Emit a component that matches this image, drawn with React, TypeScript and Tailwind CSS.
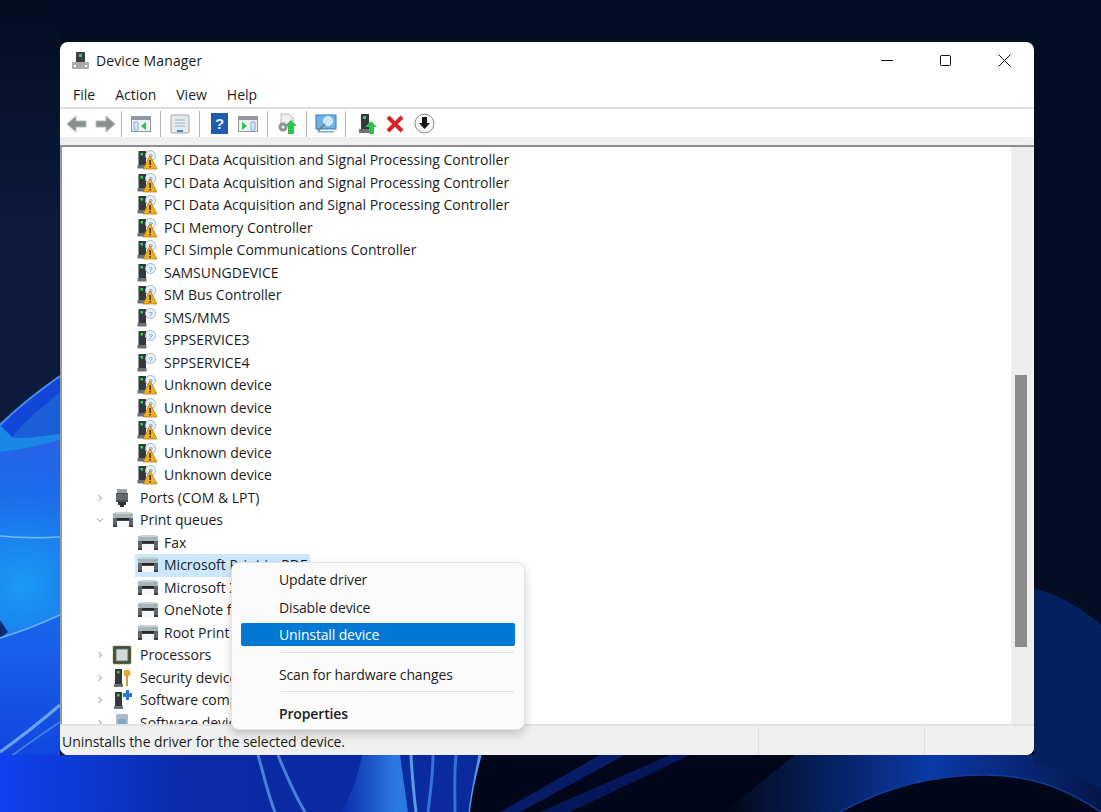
import React from "react";

const font = "font-['Open_Sans','Noto_Sans',sans-serif]";

function Wallpaper() {
  return (
    <svg className="absolute inset-0" width="1101" height="812" viewBox="0 0 1101 812">
      <defs>
        <radialGradient id="glow" cx="22" cy="585" r="170" gradientUnits="userSpaceOnUse">
          <stop offset="0" stopColor="#1a9bf8" />
          <stop offset="0.55" stopColor="#1c6cea" />
          <stop offset="1" stopColor="#2a5fe6" />
        </radialGradient>
        <linearGradient id="sky" x1="0" y1="0" x2="0" y2="1">
          <stop offset="0" stopColor="#030c20" />
          <stop offset="0.5" stopColor="#0c1b3c" />
        </linearGradient>
        <linearGradient id="lower" x1="0" y1="0" x2="0" y2="1">
          <stop offset="0" stopColor="#1a66ee" />
          <stop offset="1" stopColor="#0d3ad8" />
        </linearGradient>
        <linearGradient id="bottom" x1="0" y1="0" x2="1" y2="0">
          <stop offset="0" stopColor="#0f42f0" />
          <stop offset="0.4" stopColor="#0a2aa8" />
          <stop offset="1" stopColor="#0a2a9c" />
        </linearGradient>
        <linearGradient id="band" x1="0" y1="0" x2="1" y2="0">
          <stop offset="0" stopColor="#0a2aa8" />
          <stop offset="0.8" stopColor="#2a78e0" />
          <stop offset="1" stopColor="#2a78e0" />
        </linearGradient>
        <linearGradient id="swoosh" x1="0" y1="0" x2="1" y2="0">
          <stop offset="0" stopColor="#020818" />
          <stop offset="0.55" stopColor="#0a3aa8" />
          <stop offset="1" stopColor="#05174a" />
        </linearGradient>
      </defs>
      <rect width="1101" height="812" fill="#030e24" />
      <rect x="0" y="0" width="60" height="440" fill="url(#sky)" />

      {/* left side swirl */}
      <path d="M0 425 C20 405 40 390 60 376 L60 812 L0 812 Z" fill="#1246d8" />
      <path d="M0 448 C20 440 40 436 60 434 L60 640 L0 640 Z" fill="url(#glow)" />
      <path d="M12 437 C25 420 45 405 60 392 L60 434 C40 436 25 442 12 437 Z" fill="#1b5fd8" />
      <path d="M0 425 L0 452 C20 450 40 445 60 440 L60 434 C40 436 20 440 12 437 Z" fill="#1a86e6" />
      <path d="M0 425 C20 405 40 390 60 376" fill="none" stroke="#4a8eea" strokeWidth="2" />
      <path d="M0 536 C20 538 40 538 60 537" fill="none" stroke="#79bcf6" strokeWidth="1.5" />
      <path d="M0 620 L8 632 L0 638 Z" fill="#0c2a70" />
      <path d="M0 638 L60 615 L60 812 L0 812 Z" fill="url(#lower)" />
      <path d="M0 638 C20 632 40 624 60 615" fill="none" stroke="#6fb2f2" strokeWidth="1.5" />
      <path d="M0 752 C20 738 40 722 60 705" fill="none" stroke="#6aa4ee" strokeWidth="3" />
      <path d="M0 764 C20 750 40 735 60 722" fill="none" stroke="#3f7ee4" strokeWidth="2" />

      {/* bottom strip */}
      <rect x="0" y="755" width="482" height="57" fill="url(#bottom)" />
      <path d="M258 755 C264 775 268 795 275 812" fill="none" stroke="#4a80d8" strokeWidth="3" />
      <path d="M278 755 C286 775 295 795 305 812" fill="none" stroke="#4a80d8" strokeWidth="3" />
      <path d="M362 755 L400 755 L408 812 L340 812 C352 795 358 775 362 755 Z" fill="url(#band)" />
      <path d="M411 755 C412 775 414 795 416 812" fill="none" stroke="#5a9ae4" strokeWidth="3" />
      <path d="M433 755 C433 775 430 795 428 812" fill="none" stroke="#2f74d8" strokeWidth="3" />
      <path d="M456 755 C454 775 455 795 455 812" fill="none" stroke="#2f74d8" strokeWidth="3" />
      <path d="M480 755 C476 775 472 795 470 812" fill="none" stroke="#5a9ae4" strokeWidth="3" />
      <path d="M482 755 L1101 755 L1101 812 L470 812 C472 795 476 775 482 755 Z" fill="#01061a" />
      <path d="M625 755 L520 812 L500 812 L600 755 Z" fill="#061c66" />
      <path d="M690 755 L570 812 L540 812 L670 755 Z" fill="#05175a" />
      <path d="M795 755 C770 775 745 795 725 812 L840 812 C880 790 930 775 985 775 C1040 775 1075 795 1101 812 L1101 755 Z" fill="url(#swoosh)" />
      <path d="M840 812 C880 790 930 775 985 775 C1040 775 1075 795 1101 812" fill="#01061a" stroke="#123c9c" strokeWidth="1.5" />

      {/* right side */}
      <path d="M1034 588 C1060 595 1085 610 1101 625 L1101 790 C1085 778 1060 768 1034 765 Z" fill="#04205e" />
    </svg>
  );
}

function TreeIcon({ kind }: { kind: string }) {
  if (kind === "warn" || kind === "unknown") {
    return (
      <svg width="20" height="20" viewBox="0 0 20 20">
        <rect x="1.5" y="1" width="7.5" height="14" fill="#33383c" />
        <rect x="3.5" y="3" width="2.5" height="2.5" fill="#2fd55a" />
        <rect x="0.5" y="15" width="9" height="3.5" fill="#6b7074" />
        <circle cx="13.5" cy="5.5" r="5" fill="#eef4fa" stroke="#9fb3c6" />
        <text x="13.5" y="8.5" fontSize="8" textAnchor="middle" fill="#2a7fd0" fontFamily="Liberation Sans">?</text>
        {kind === "warn" && <path d="M13 5.5 L20 19 L6 19 Z" fill="#f2b01e" stroke="#a9700f" strokeWidth="0.7" />}
        {kind === "warn" && <rect x="12.4" y="10" width="1.4" height="5" fill="#222" />}
        {kind === "warn" && <rect x="12.4" y="16" width="1.4" height="1.5" fill="#222" />}
      </svg>
    );
  }
  if (kind === "printer") {
    return (
      <svg width="22" height="18" viewBox="0 0 22 18">
        <rect x="1" y="2" width="20" height="5" rx="1" fill="#a7b4ba" />
        <rect x="3" y="1" width="16" height="2" fill="#c9d2d6" />
        <rect x="17" y="4" width="2" height="1" fill="#3fd463" />
        <rect x="1" y="7" width="20" height="7" fill="#5e6468" />
        <rect x="5" y="7" width="12" height="2.5" fill="#25282b" />
        <rect x="5" y="10" width="12" height="6" fill="#f4f6f7" />
        <rect x="1" y="14" width="4" height="2" fill="#3c4043" />
        <rect x="17" y="14" width="4" height="2" fill="#3c4043" />
      </svg>
    );
  }
  if (kind === "ports") {
    return (
      <svg width="20" height="20" viewBox="0 0 20 20">
        <rect x="5" y="1" width="10" height="4" fill="#9aa0a4" />
        <rect x="4" y="5" width="12" height="9" fill="#4b5054" />
        <path d="M4 7h12M4 9h12M4 11h12" stroke="#8b9195" strokeWidth="0.8" />
        <rect x="6" y="14" width="8" height="3" fill="#2e3235" />
        <rect x="8" y="17" width="4" height="2" fill="#2e3235" />
      </svg>
    );
  }
  if (kind === "cpu") {
    return (
      <svg width="20" height="20" viewBox="0 0 20 20">
        <rect x="1" y="1" width="18" height="18" rx="1" fill="#35503f" stroke="#b9893a" strokeDasharray="1.5 1" />
        <rect x="4" y="4" width="12" height="12" fill="#d5dad9" stroke="#69736f" />
      </svg>
    );
  }
  if (kind === "security") {
    return (
      <svg width="20" height="20" viewBox="0 0 20 20">
        <rect x="3" y="1" width="7" height="15" fill="#33383c" />
        <rect x="5" y="3" width="2.5" height="2.5" fill="#2fd55a" />
        <rect x="2" y="16" width="9" height="3" fill="#6b7074" />
        <circle cx="15" cy="5" r="3.5" fill="#e8a92e" />
        <rect x="14" y="7" width="2" height="11" fill="#d9962a" />
      </svg>
    );
  }
  if (kind === "software") {
    return (
      <svg width="20" height="20" viewBox="0 0 20 20">
        <rect x="3" y="2" width="7" height="14" fill="#33383c" />
        <rect x="5" y="4" width="2.5" height="2.5" fill="#2fd55a" />
        <rect x="2" y="16" width="9" height="3" fill="#6b7074" />
        <path d="M11 3h3V0h3v3h3v4h-3v3h-3V7h-3z" fill="#2a78d2" />
      </svg>
    );
  }
  return (
    <svg width="20" height="20" viewBox="0 0 20 20">
      <rect x="4" y="1" width="12" height="17" rx="1" fill="#aebcc9" />
      <rect x="6" y="6" width="8" height="8" fill="#7fa8cc" />
    </svg>
  );
}

const pci = "PCI Data Acquisition and Signal Processing Controller";
const rows: { label: string; icon: string; level: number; chevron?: string; selected?: boolean }[] = [
  { label: pci, icon: "warn", level: 2 },
  { label: pci, icon: "warn", level: 2 },
  { label: pci, icon: "warn", level: 2 },
  { label: "PCI Memory Controller", icon: "warn", level: 2 },
  { label: "PCI Simple Communications Controller", icon: "warn", level: 2 },
  { label: "SAMSUNGDEVICE", icon: "unknown", level: 2 },
  { label: "SM Bus Controller", icon: "warn", level: 2 },
  { label: "SMS/MMS", icon: "unknown", level: 2 },
  { label: "SPPSERVICE3", icon: "unknown", level: 2 },
  { label: "SPPSERVICE4", icon: "unknown", level: 2 },
  { label: "Unknown device", icon: "warn", level: 2 },
  { label: "Unknown device", icon: "warn", level: 2 },
  { label: "Unknown device", icon: "warn", level: 2 },
  { label: "Unknown device", icon: "warn", level: 2 },
  { label: "Unknown device", icon: "warn", level: 2 },
  { label: "Ports (COM & LPT)", icon: "ports", level: 1, chevron: "right" },
  { label: "Print queues", icon: "printer", level: 1, chevron: "down" },
  { label: "Fax", icon: "printer", level: 2 },
  { label: "Microsoft Print to PDF", icon: "printer", level: 2, selected: true },
  { label: "Microsoft XPS Document Writer", icon: "printer", level: 2 },
  { label: "OneNote for Windows 10", icon: "printer", level: 2 },
  { label: "Root Print Queue", icon: "printer", level: 2 },
  { label: "Processors", icon: "cpu", level: 1, chevron: "right" },
  { label: "Security devices", icon: "security", level: 1, chevron: "right" },
  { label: "Software components", icon: "software", level: 1, chevron: "right" },
  { label: "Software devices", icon: "device", level: 1, chevron: "right" },
];

function TreeRow({ row }: { row: (typeof rows)[number] }) {
  return (
    <div className={`flex h-[22.5px] items-center ${row.level === 1 ? "pl-[30px]" : "pl-[73px]"}`}>
      {row.level === 1 && (
        <span className="flex w-[16px] justify-center text-[#8a8a8a]">
          <svg width="8" height="8" viewBox="0 0 8 8" fill="none" stroke="currentColor" strokeWidth="1">
            {row.chevron === "right" ? <path d="M2.5 1 L5.5 4 L2.5 7" /> : <path d="M1 2.5 L4 5.5 L7 2.5" />}
          </svg>
        </span>
      )}
      <div className={`flex h-[22.5px] items-center ${row.selected ? "bg-[#cce8ff]" : ""} ${row.level === 1 ? "ml-[4px]" : "pl-[2px]"}`}>
        <span className={`flex items-center ${row.level === 1 ? "w-[28px]" : "w-[27px]"}`}><TreeIcon kind={row.icon} /></span>
        <span className="whitespace-nowrap pr-[3px] text-[14px] leading-none text-[#1c1c1c]">{row.label}</span>
      </div>
    </div>
  );
}

function ToolSep({ tight }: { tight?: boolean }) {
  return <span className={`mr-[8px] h-[26px] w-px bg-[#b4b4b4] ${tight ? "ml-[5px]" : "ml-[8px]"}`} />;
}

function ToolIconBox({ children }: { children: React.ReactNode }) {
  return <span className="flex h-[24px] w-[22px] items-center justify-center">{children}</span>;
}

function WinPane({ side }: { side: "left" | "right" }) {
  return (
    <svg width="20" height="16" viewBox="0 0 20 16">
      <rect x="0.5" y="0.5" width="19" height="15" fill="#eef1f2" stroke="#8f979c" />
      <rect x="1" y="1" width="18" height="3" fill="#8f9aa0" />
      {side === "left" ? (
        <>
          <path d="M3 6h4v8H3z" fill="#d9e9f6" stroke="#3a8ad0" strokeWidth="0.6" />
          <path d="M15 6 L10 10 L15 14 Z" fill="#28c24e" />
        </>
      ) : (
        <>
          <path d="M4 6 L9 10 L4 14 Z" fill="#28c24e" />
          <path d="M13 6h4v8h-4z" fill="#d9e9f6" stroke="#3a8ad0" strokeWidth="0.6" />
        </>
      )}
    </svg>
  );
}

function Toolbar() {
  return (
    <div className="flex h-[28px] items-center bg-white pl-[5px] pt-[1px]">
      <ToolIconBox>
        <svg width="21" height="18" viewBox="0 0 21 18"><path d="M10 1 L1 9 L10 17 V12 H20 V6 H10 Z" fill="#8a8f8f" stroke="#b4b8b8" strokeLinejoin="round" /></svg>
      </ToolIconBox>
      <span className="w-[7px]" />
      <ToolIconBox>
        <svg width="21" height="18" viewBox="0 0 21 18"><path d="M11 1 L20 9 L11 17 V12 H1 V6 H11 Z" fill="#8a8f8f" stroke="#b4b8b8" strokeLinejoin="round" /></svg>
      </ToolIconBox>
      <ToolSep tight />
      <ToolIconBox><WinPane side="left" /></ToolIconBox>
      <ToolSep />
      <ToolIconBox>
        <svg width="20" height="20" viewBox="0 0 20 20">
          <rect x="1" y="1" width="18" height="18" rx="1" fill="#e8ebec" stroke="#a1a7aa" />
          <path d="M5 6h10M5 9h10M5 12h10" stroke="#9cb4c8" strokeWidth="1.2" />
          <rect x="7" y="16" width="6" height="2" fill="#3a8ad0" />
        </svg>
      </ToolIconBox>
      <ToolSep />
      <ToolIconBox>
        <svg width="17" height="21" viewBox="0 0 17 21">
          <rect width="17" height="21" fill="#1f5bb0" />
          <text x="8.5" y="16" fontSize="15" fontWeight="700" textAnchor="middle" fill="#e6eef8" fontFamily="Liberation Sans">?</text>
        </svg>
      </ToolIconBox>
      <span className="w-[7px]" />
      <ToolIconBox><WinPane side="right" /></ToolIconBox>
      <ToolSep />
      <ToolIconBox>
        <svg width="22" height="22" viewBox="0 0 22 22">
          <path d="M5 1h8l4 4v7H5z" fill="#eef0f1" stroke="#b3b7b9" />
          <circle cx="7" cy="14" r="4.5" fill="#8f9496" />
          <circle cx="7" cy="14" r="1.6" fill="#eee" />
          <path d="M15 7 L21 13 H18 V21 H12 V13 H9 Z" fill="#2fc24f" />
        </svg>
      </ToolIconBox>
      <ToolSep />
      <ToolIconBox>
        <svg width="22" height="20" viewBox="0 0 22 20">
          <rect x="1" y="1" width="20" height="14" fill="#6fb3e6" stroke="#2a7fc4" />
          <rect x="3" y="17" width="16" height="1.5" fill="#7fa6c4" />
          <circle cx="13" cy="7" r="4.5" fill="#cfe6f7" stroke="#eef6fb" />
          <path d="M10 10 L3 17" stroke="#6c7478" strokeWidth="1.6" />
        </svg>
      </ToolIconBox>
      <ToolSep />
      <span className="w-[3px]" />
      <ToolIconBox>
        <svg width="18" height="22" viewBox="0 0 18 22">
          <rect x="2" y="1" width="8" height="15" fill="#33383c" />
          <rect x="4" y="3" width="3" height="3" fill="#2fd55a" />
          <rect x="0" y="16" width="11" height="4" fill="#6b7074" />
          <path d="M12 8 L18 14 H15 V21 H10 V14 H6 Z" fill="#2fc24f" />
        </svg>
      </ToolIconBox>
      <span className="w-[5px]" />
      <ToolIconBox>
        <svg width="18" height="18" viewBox="0 0 18 18"><path d="M2 2 L16 16 M16 2 L2 16" stroke="#d8222a" strokeWidth="4" /></svg>
      </ToolIconBox>
      <span className="w-[7px]" />
      <ToolIconBox>
        <svg width="21" height="21" viewBox="0 0 21 21">
          <circle cx="10.5" cy="10.5" r="9.5" fill="#f6f6f6" stroke="#8a8a8a" />
          <path d="M8 4h5v6h3l-5.5 6L5 10h3z" fill="#141414" />
        </svg>
      </ToolIconBox>
    </div>
  );
}

function MenuItem({ label, active, bold }: { label: string; active?: boolean; bold?: boolean }) {
  return (
    <div className={`flex h-[23px] items-center rounded-[2px] pl-[38px] text-[14px] tracking-[-0.14px] ${active ? "bg-[#0078d4] text-white" : "text-[#1c1c1c]"} ${bold ? "font-semibold" : ""}`}>
      {label}
    </div>
  );
}

function ContextMenu() {
  return (
    <div className="absolute left-[171px] top-[520px] z-10 w-[294px] rounded-[8px] border border-[#e3e3e3] bg-[#fbfbfb] px-[9px] pt-[5px] shadow-[0_4px_10px_rgba(0,0,0,0.2)]">
      <div className="flex flex-col gap-[4.5px]">
        <MenuItem label="Update driver" />
        <MenuItem label="Disable device" />
        <MenuItem label="Uninstall device" active />
      </div>
      <div className="mb-[10px] ml-[40px] mr-[1px] mt-[6px] h-px bg-[#e0e0e0]" />
      <MenuItem label="Scan for hardware changes" />
      <div className="mb-[10px] ml-[40px] mr-[1px] mt-[5px] h-px bg-[#e0e0e0]" />
      <MenuItem label="Properties" bold />
      <div className="h-[4px]" />
    </div>
  );
}

export default function App() {
  return (
    <div className={`relative h-[812px] w-[1101px] overflow-hidden ${font}`}>
      <Wallpaper />
      <div className="absolute left-[60px] top-[42px] flex h-[713px] w-[974px] flex-col rounded-[8px] bg-white">
        <div className="flex h-[39px] items-center justify-between pb-[2px] pl-[11px]">
          <div className="flex items-center gap-[6px]">
            <svg width="19" height="20" viewBox="0 0 19 20">
              <rect x="5" y="1" width="9" height="11" fill="#3b3f42" />
              <rect x="8" y="3" width="3" height="3" fill="#30d060" />
              <rect x="1" y="11" width="17" height="7" rx="1" fill="#a9adaf" />
              <rect x="3" y="14" width="2" height="2" fill="#fff" />
              <rect x="14" y="14" width="2" height="2" fill="#fff" />
            </svg>
            <span className="text-[14px] tracking-[0.12px] text-[#1c1c1c]">Device Manager</span>
          </div>
          <div className="flex items-center">
            <span className="flex w-[59px] justify-center"><span className="h-px w-[12px] bg-[#111]" /></span>
            <span className="flex w-[59px] justify-center"><span className="h-[11px] w-[11px] rounded-[1.5px] border border-[#111]" /></span>
            <span className="flex w-[59px] justify-center">
              <svg width="13" height="13" viewBox="0 0 13 13"><path d="M0.5 0.5 L12.5 12.5 M12.5 0.5 L0.5 12.5" stroke="#111" strokeWidth="1" /></svg>
            </span>
          </div>
        </div>
        <div className="flex h-[28px] items-center gap-[20px] border-b-[2px] border-[#dcdfe0] pl-[13px] text-[14px] text-[#1c1c1c]">
          <span>File</span>
          <span>Action</span>
          <span>View</span>
          <span>Help</span>
        </div>
        <Toolbar />
        <div className="h-[10px] border-b-[2px] border-[#8d8d8d] bg-[#f0f0f0]" />
        <div className="flex min-h-0 flex-1 border-l-[2px] border-r-[2px] border-[#9a9a9a] border-r-[#f0f0f0]">
          <div className="min-w-0 flex-1 overflow-hidden bg-white pt-[2px]">
            {rows.map((r, i) => <TreeRow key={i} row={r} />)}
          </div>
          <div className="flex w-[21px] flex-col bg-[#eeeeee] pl-[4px]">
            <div className="mt-[228px] h-[272px] w-[12px] bg-[#8b8b8b]" />
          </div>
        </div>
        <div className="flex h-[31px] items-center rounded-b-[8px] border-t-[2px] border-[#e2e2e2] bg-[#f0f0f0] pl-[2px] pt-[1px] text-[14px] tracking-[-0.05px] text-[#1c1c1c]">
          <span className="w-[696px]">Uninstalls the driver for the selected device.</span>
          <span className="h-full w-[166px] border-l border-[#e0e0e0]" />
          <span className="h-full w-[108px] border-l border-[#e0e0e0]" />
        </div>
        <ContextMenu />
      </div>
    </div>
  );
}
